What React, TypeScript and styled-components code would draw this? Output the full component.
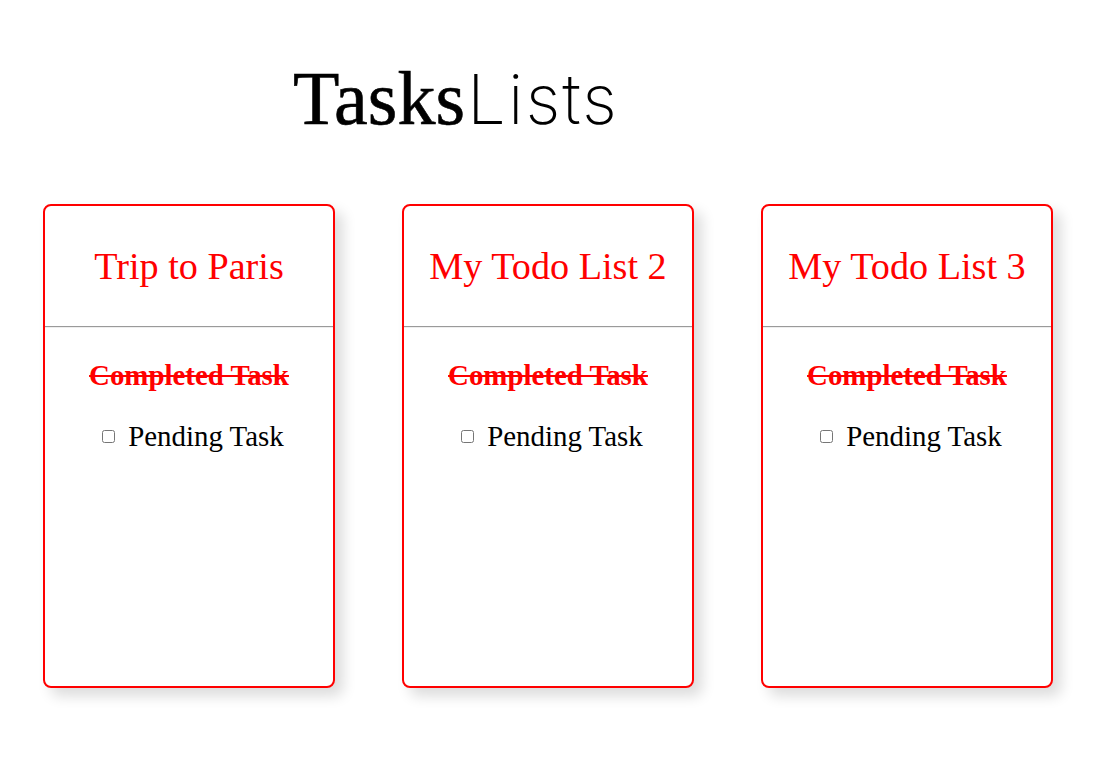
import React from "react";
import styled, { createGlobalStyle } from "styled-components";

const GlobalStyle = createGlobalStyle`
  html, body { margin: 0; padding: 0; background: #ffffff; }
  body { font-family: "Liberation Serif", "Times New Roman", serif; }
`;

const Page = styled.div`
  width: 1096px;
  min-height: 771px;
  box-sizing: border-box;
`;

const Heading = styled.h1`
  margin: 0;
  padding: 58px 0 0 293px;
  height: 146px;
  box-sizing: border-box;
  font-weight: normal;
  font-size: 76px;
  line-height: 80px;
  white-space: nowrap;
  color: #000;
`;

const HeadingSerif = styled.span`
  font-family: "Liberation Serif", "Times New Roman", serif;
  font-weight: 400;
  -webkit-text-stroke: 0.6px #000;
`;

const HeadingThin = styled.span`
  font-family: Inter, "Noto Sans", sans-serif;
  font-weight: 200;
  font-size: 69px;
  letter-spacing: 2px;
  margin-left: 2px;
`;

const Board = styled.div`
  display: flex;
  justify-content: center;
  gap: 67px;
  margin-top: 58px;
`;

const Card = styled.section`
  width: 292px;
  height: 484px;
  box-sizing: border-box;
  border: 2px solid #ff0000;
  border-radius: 8px;
  background: #fff;
  box-shadow: 8px 8px 14px rgba(0, 0, 0, 0.14);
  display: flex;
  flex-direction: column;
`;

const CardHeader = styled.div`
  height: 120px;
  display: flex;
  align-items: center;
  justify-content: center;
`;

const CardTitle = styled.h2`
  margin: 0;
  font-weight: normal;
  font-size: 38.2px;
  color: #ff0000;
  white-space: nowrap;
`;

const Divider = styled.hr`
  margin: 0;
  border: 0;
  border-top: 1px solid #9a9a9a;
  border-bottom: 1px solid #eeeeee;
  height: 0;
`;

const TaskList = styled.ul`
  list-style: none;
  margin: 0;
  padding: 31px 0 0;
  display: flex;
  flex-direction: column;
  align-items: center;
  gap: 28px;
`;

const Task = styled.li<{ $done?: boolean }>`
  display: flex;
  align-items: center;
  font-size: 28.9px;
  line-height: 33px;
  color: ${(p) => (p.$done ? "#ff0000" : "#000")};
  font-weight: ${(p) => (p.$done ? 700 : 400)};
  text-decoration: ${(p) => (p.$done ? "line-through" : "none")};
  text-decoration-color: #ff0000;
  white-space: nowrap;
`;

const Check = styled.input`
  width: 13px;
  height: 13px;
  margin: 0 13px 0 8px;
`;

const lists = ["Trip to Paris", "My Todo List 2", "My Todo List 3"];

export default function App() {
  return (
    <Page>
      <GlobalStyle />
      <Heading>
        <HeadingSerif>Tasks</HeadingSerif>
        <HeadingThin>Lists</HeadingThin>
      </Heading>
      <Board>
        {lists.map((name) => (
          <Card key={name}>
            <CardHeader>
              <CardTitle>{name}</CardTitle>
            </CardHeader>
            <Divider />
            <TaskList>
              <Task $done>Completed Task</Task>
              <Task>
                <Check type="checkbox" />
                Pending Task
              </Task>
            </TaskList>
          </Card>
        ))}
      </Board>
    </Page>
  );
}
